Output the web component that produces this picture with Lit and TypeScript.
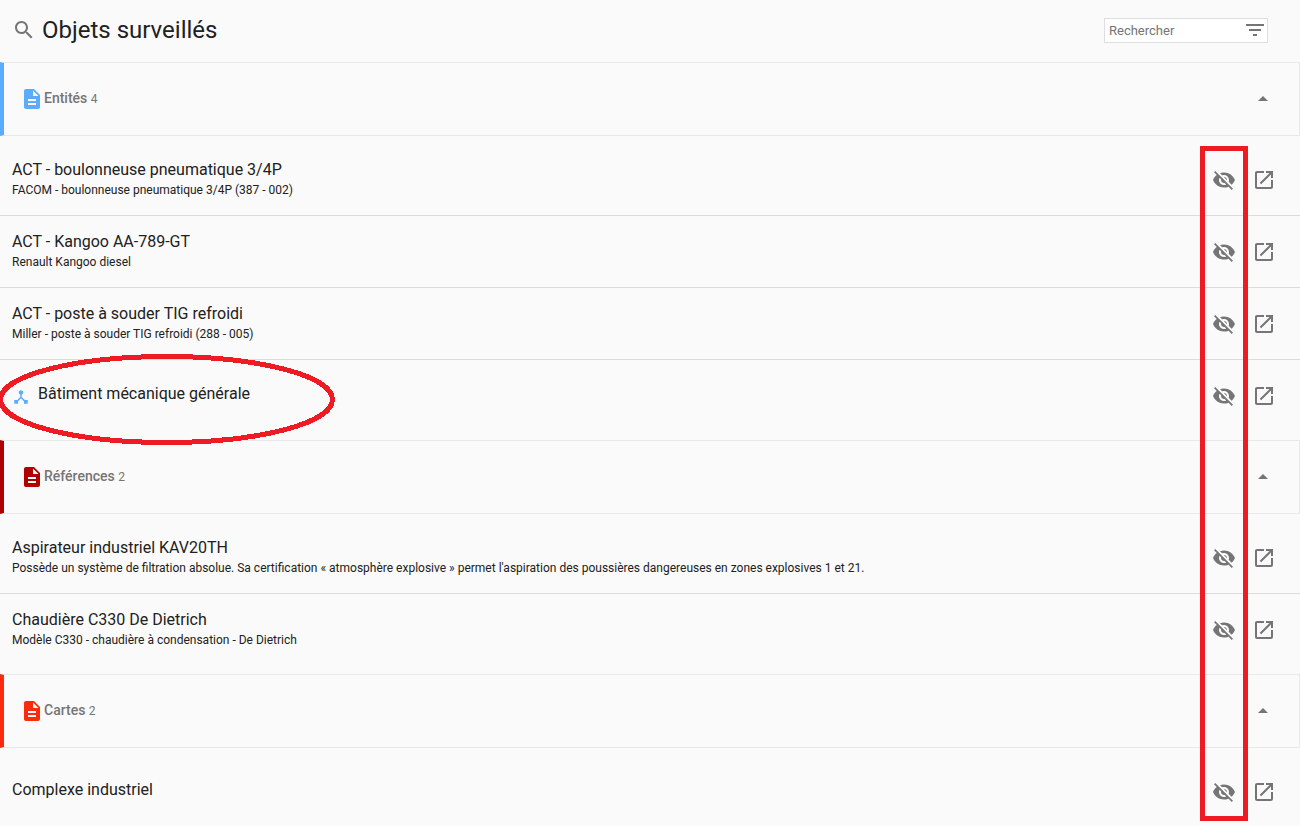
import { LitElement, html, css, svg, nothing } from "lit";
import { customElement, property, state } from "lit/decorators.js";

interface Item {
  title: string;
  detail?: string;
  node?: boolean;
  marked?: boolean;
}

interface Group {
  name: string;
  count: number;
  tone: string;
  items: Item[];
}

const GROUPS: Group[] = [
  {
    name: "Entités",
    count: 4,
    tone: "blue",
    items: [
      { title: "ACT - boulonneuse pneumatique 3/4P", detail: "FACOM - boulonneuse pneumatique 3/4P (387 - 002)" },
      { title: "ACT - Kangoo AA-789-GT", detail: "Renault Kangoo diesel" },
      { title: "ACT - poste à souder TIG refroidi", detail: "Miller - poste à souder TIG refroidi (288 - 005)" },
      { title: "Bâtiment mécanique générale", node: true, marked: true },
    ],
  },
  {
    name: "Références",
    count: 2,
    tone: "crimson",
    items: [
      {
        title: "Aspirateur industriel KAV20TH",
        detail:
          "Possède un système de filtration absolue. Sa certification « atmosphère explosive » permet l'aspiration des poussières dangereuses en zones explosives 1 et 21.",
      },
      { title: "Chaudière C330 De Dietrich", detail: "Modèle C330 - chaudière à condensation - De Dietrich" },
    ],
  },
  {
    name: "Cartes",
    count: 2,
    tone: "red",
    items: [{ title: "Complexe industriel" }],
  },
];

const ICONS = {
  search: svg`<path d="M15.5 14h-.79l-.28-.27C15.41 12.59 16 11.11 16 9.5 16 5.91 13.09 3 9.5 3S3 5.91 3 9.5 5.91 16 9.5 16c1.61 0 3.09-.59 4.23-1.57l.27.28v.79l5 4.99L20.49 19l-4.99-5zm-6 0C7.01 14 5 11.99 5 9.5S7.01 5 9.5 5 14 7.01 14 9.5 11.99 14 9.5 14z"/>`,
  filter: svg`<path d="M10 18h4v-2h-4v2zM3 6v2h18V6H3zm3 7h12v-2H6v2z"/>`,
  file: svg`<path d="M14 2H6c-1.1 0-1.99.9-1.99 2L4 20c0 1.1.89 2 1.99 2H18c1.1 0 2-.9 2-2V8l-6-6zm2 16H8v-2h8v2zm0-4H8v-2h8v2zm-3-5V3.500L18.500 9H13z"/>`,
  up: svg`<path d="M7 14l5-5 5 5z"/>`,
  down: svg`<path d="M7 10l5 5 5-5z"/>`,
  hidden: svg`<path d="M12 7c2.76 0 5 2.24 5 5 0 .65-.13 1.26-.36 1.83l2.920 2.920c1.510-1.260 2.700-2.890 3.430-4.750-1.730-4.390-6-7.500-11-7.500-1.400 0-2.740.250-3.980.700l2.160 2.160C10.740 7.130 11.350 7 12 7zM2 4.270l2.280 2.280.460.460C3.080 8.300 1.780 10.020 1 12c1.730 4.390 6 7.500 11 7.500 1.550 0 3.030-.300 4.380-.840l.420.420L19.730 22 21 20.730 3.270 3 2 4.270zM7.530 9.800l1.550 1.550c-.050.210-.080.430-.080.650 0 1.660 1.340 3 3 3 .220 0 .440-.030.650-.080l1.550 1.550c-.670.330-1.410.530-2.200.530-2.760 0-5-2.240-5-5 0-.790.200-1.530.530-2.200zm4.310-.780l3.150 3.150.020-.160c0-1.660-1.340-3-3-3l-.170.010z"/>`,
  open: svg`<path d="M19 19H5V5h7V3H5c-1.110 0-2 .900-2 2v14c0 1.100.890 2 2 2h14c1.100 0 2-.900 2-2v-7h-2v7zM14 3v2h3.590l-9.830 9.830 1.410 1.410L19 6.410V10h2V3h-7z"/>`,
  node: svg`<path d="M17 16l-4-4V8.820C14.160 8.400 15 7.300 15 6c0-1.660-1.340-3-3-3S9 4.340 9 6c0 1.300.840 2.400 2 2.820V12l-4 4H3v5h5v-3.050l4-4.200 4 4.200V21h5v-5h-4z"/>`,
};

const icon = (name: keyof typeof ICONS, extra = "") =>
  html`<svg class="icon ${extra}" viewBox="0 0 24 24" aria-hidden="true">${ICONS[name]}</svg>`;

const iconStyles = css`
  * {
    box-sizing: border-box;
  }
  .icon {
    display: block;
    flex: none;
    width: 24px;
    height: 24px;
    fill: #757575;
  }
  button {
    display: block;
    padding: 0;
    border: 0;
    background: none;
    font: inherit;
    color: inherit;
    cursor: pointer;
  }
`;

@customElement("watched-item")
class WatchedItem extends LitElement {
  @property({ attribute: false }) item!: Item;

  static styles = [
    iconStyles,
    css`
      :host {
        display: block;
      }
      .row {
        position: relative;
        display: flex;
        align-items: center;
        gap: 16px;
        height: 72px;
        padding: 0 24px 0 12px;
      }
      .content {
        display: flex;
        flex: 1;
        gap: 8px;
        min-width: 0;
        padding-bottom: 4px;
      }
      .title,
      .detail {
        margin: 0;
        font-weight: 400;
        overflow: hidden;
        text-overflow: ellipsis;
        white-space: nowrap;
      }
      .text {
        min-width: 0;
      }
      .title {
        font-size: 16px;
        line-height: 24px;
      }
      .detail {
        font-size: 12px;
        line-height: 16px;
      }
      .icon.node {
        width: 18px;
        height: 18px;
        margin-top: 6px;
        fill: #5aacff;
      }
      .ring {
        position: absolute;
        left: 0;
        top: -6px;
        width: 335px;
        height: 91px;
        overflow: visible;
        fill: none;
        stroke: #ed1c24;
        stroke-width: 5;
        pointer-events: none;
        z-index: 1;
      }
    `,
  ];

  render() {
    const { title, detail, node, marked } = this.item;
    return html`
      <div class="row">
        <div class="content">
          ${node ? icon("node", "node") : nothing}
          <div class="text">
            <h3 class="title">${title}</h3>
            ${detail ? html`<p class="detail">${detail}</p>` : nothing}
          </div>
        </div>
        <button type="button" aria-label="Ne plus surveiller ${title}">${icon("hidden")}</button>
        <a href="#" aria-label="Ouvrir ${title}">${icon("open")}</a>
        ${marked
          ? html`<svg class="ring" viewBox="0 0 335 91" shape-rendering="crispEdges" aria-hidden="true">
              <ellipse cx="166.500" cy="45.500" rx="166" ry="43" />
            </svg>`
          : nothing}
      </div>
    `;
  }
}

@customElement("watched-group")
class WatchedGroup extends LitElement {
  @property({ attribute: false }) group!: Group;
  @state() private expanded = true;

  static styles = [
    iconStyles,
    css`
      :host {
        display: block;
      }
      .bar {
        display: flex;
        align-items: center;
        width: 100%;
        height: 74px;
        padding: 0 24px 0 16px;
        border: 1px solid #e8e8e8;
        border-left: 4px solid var(--tone);
        text-align: left;
      }
      .heading {
        margin: 0;
        font-weight: 400;
      }
      .blue {
        --tone: #5aacff;
      }
      .crimson {
        --tone: #b00000;
      }
      .red {
        --tone: #fc2b0d;
      }
      .icon.file {
        fill: var(--tone);
      }
      .label {
        flex: 1;
        padding-bottom: 2px;
        font-size: 14px;
        line-height: 20px;
        color: #757575;
      }
      .name {
        font-weight: 500;
      }
      .count {
        font-size: 12px;
      }
      .items {
        margin: 0;
        padding: 8px 0;
        list-style: none;
      }
      .entry + .entry {
        margin-top: -1px;
        border-top: 1px solid #dcdcdc;
      }
    `,
  ];

  render() {
    const { name, count, tone, items } = this.group;
    return html`
      <section>
        <h2 class="heading ${tone}">
          <button
            class="bar"
            type="button"
            aria-expanded=${this.expanded}
            @click=${() => (this.expanded = !this.expanded)}
          >
            ${icon("file", "file")}
            <span class="label"><span class="name">${name}</span> <span class="count">${count}</span></span>
            ${icon(this.expanded ? "up" : "down")}
          </button>
        </h2>
        ${this.expanded
          ? html`<ul class="items">
              ${items.map((item) => html`<li class="entry"><watched-item .item=${item}></watched-item></li>`)}
            </ul>`
          : nothing}
      </section>
    `;
  }
}

@customElement("app-root")
class AppRoot extends LitElement {
  static styles = [
    iconStyles,
    css`
      :host {
        display: block;
        height: 100vh;
        overflow: hidden;
        background: #fafafa;
        color: #212121;
        font-family: Roboto, "Liberation Sans", sans-serif;
      }
      .page {
        position: relative;
      }
      .top {
        display: flex;
        align-items: center;
        gap: 6px;
        height: 62px;
        padding: 0 32px 2px 12px;
      }
      .heading {
        flex: 1;
        margin: 0;
        font-size: 24px;
        font-weight: 400;
        line-height: 32px;
      }
      .search {
        display: flex;
        align-items: center;
        width: 164px;
        height: 25px;
        border: 1px solid #dedede;
        background: #fff;
      }
      .field {
        flex: 1;
        min-width: 0;
        padding: 2px 4px 0;
        border: 0;
        outline: 0;
        background: none;
        font: 13px/20px Roboto, "Liberation Sans", sans-serif;
        color: inherit;
      }
      .field::placeholder {
        color: #757575;
        opacity: 1;
      }
      .frame {
        position: absolute;
        top: 146px;
        right: 52px;
        width: 48px;
        height: 675px;
        border: 5px solid #ed1c24;
        pointer-events: none;
      }
    `,
  ];

  render() {
    return html`
      <main class="page">
        <header class="top">
          ${icon("search")}
          <h1 class="heading">Objets surveillés</h1>
          <div class="search">
            <input class="field" type="text" placeholder="Rechercher" aria-label="Rechercher" />
            <button type="button" aria-label="Filtrer">${icon("filter")}</button>
          </div>
        </header>
        ${GROUPS.map((group) => html`<watched-group .group=${group}></watched-group>`)}
        <div class="frame"></div>
      </main>
    `;
  }
}
